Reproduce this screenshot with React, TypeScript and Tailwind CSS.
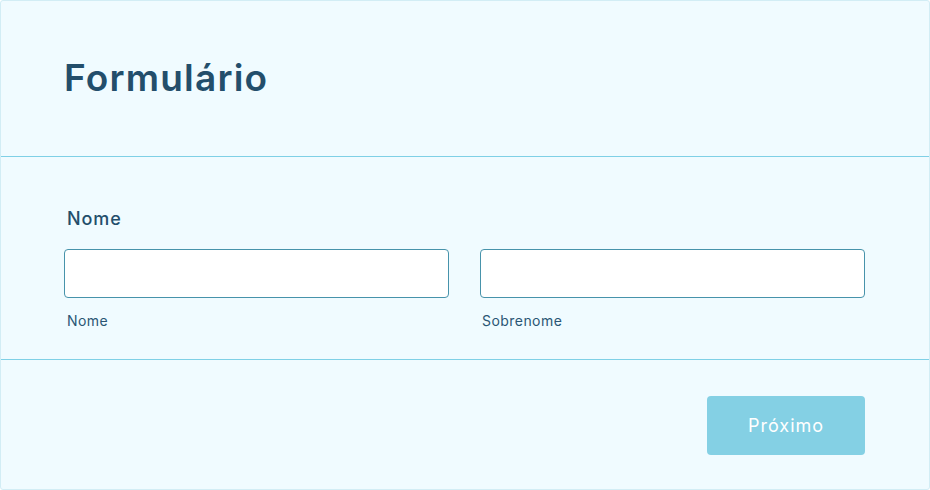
export default function App() {
  return (
    <div
      className="w-[930px] h-[490px] bg-[#f0fbff] border border-[#d2edf5] rounded-[3px] flex flex-col text-[#234e6b]"
      style={{ fontFamily: '"Inter", "Open Sans", sans-serif' }}
    >
      {/* Header */}
      <div className="h-[156px] border-b border-[#7fd0e6] flex items-center px-[63px] pb-[2px]">
        <h1 className="text-[37px] font-semibold tracking-[1.2px] text-[#234e6b]">Formulário</h1>
      </div>

      {/* Fields */}
      <div className="h-[203px] border-b border-[#7fd0e6] px-[63px] pt-[50px]">
        <p className="text-[18px] font-medium tracking-[0.9px] leading-[24px] pl-[3px]">Nome</p>
        <div className="mt-[18px] grid grid-cols-2 gap-[31px] w-[801px]">
          <div>
            <input className="block w-full h-[49px] bg-white border border-[#4793ab] rounded-[4px] px-3 outline-none" />
            <p className="mt-[14px] text-[14px] tracking-[0.45px] pl-[3px] leading-[18px] text-[#2a5674]">Nome</p>
          </div>
          <div>
            <input className="block w-full h-[49px] bg-white border border-[#4793ab] rounded-[4px] px-3 outline-none" />
            <p className="mt-[14px] text-[14px] tracking-[0.45px] pl-[2px] leading-[18px] text-[#2a5674]">Sobrenome</p>
          </div>
        </div>
      </div>

      {/* Footer */}
      <div className="flex-1 flex justify-end items-start pt-[36px] pr-[64px]">
        <button className="w-[158px] h-[59px] bg-[#84d0e4] text-white text-[18px] font-normal tracking-[1px] rounded-[4px]">
          Próximo
        </button>
      </div>
    </div>
  );
}
